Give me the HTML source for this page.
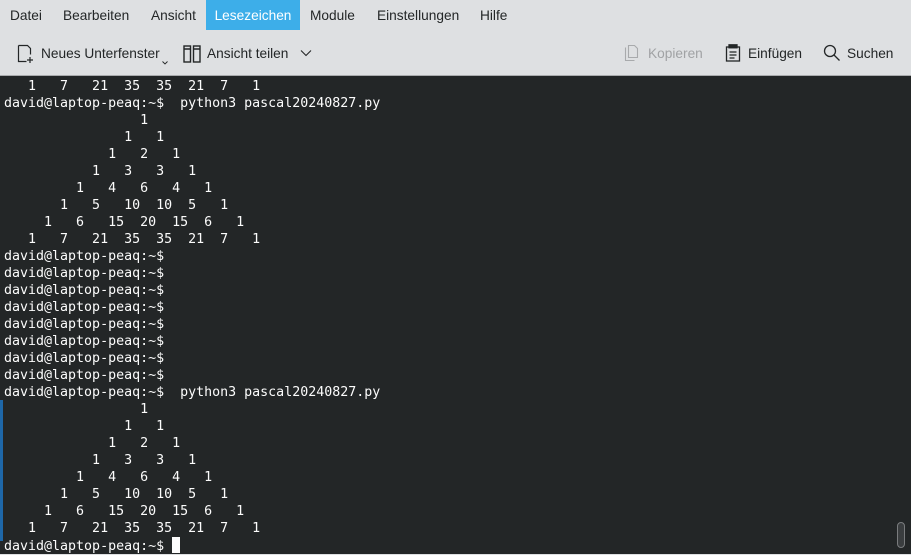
<!DOCTYPE html>
<html><head><meta charset="utf-8"><style>
*{margin:0;padding:0;box-sizing:border-box}
body{width:911px;height:554px;overflow:hidden;background:#dee0e2;font-family:"Liberation Sans","DejaVu Sans",sans-serif;position:relative}
.menu{position:absolute;top:0;left:0;height:30px;width:911px;font-size:13.7px;color:#232627}
.menu span{position:absolute;top:0;height:30px;line-height:31px}
.sel{background:#3daee9;color:#fff}
.tb{position:absolute;font-size:13.7px;color:#232627;top:46px;line-height:16px}
.term{position:absolute;top:75px;left:0;width:911px;height:479px;background:#232627;border-top:1px solid #a9abad}
pre{position:absolute;left:4px;top:2px;font-family:"DejaVu Sans Mono","Liberation Mono",monospace;font-size:13.3px;line-height:17px;color:#fcfcfc}
.cur{background:#fcfcfc;display:inline-block;width:8px;height:16px;vertical-align:-3px}
</style></head><body>
<div class="menu">
<span style="left:10px">Datei</span>
<span style="left:63px">Bearbeiten</span>
<span style="left:151px">Ansicht</span>
<span class="sel" style="left:206px;width:94px;text-align:center">Lesezeichen</span>
<span style="left:310px">Module</span>
<span style="left:377px">Einstellungen</span>
<span style="left:480px">Hilfe</span>
</div>
<svg style="position:absolute;left:17px;top:44px" width="18" height="20" viewBox="0 0 18 20" fill="none" stroke="#232627" stroke-width="1.2"><path d="M1.5 1.5h9l3 3v6M1.5 1.5v16h8"/><path d="M13 13v6M10 16h6"/></svg>
<div class="tb" style="left:41px">Neues Unterfenster</div>
<svg style="position:absolute;left:162px;top:61px" width="6" height="4" viewBox="0 0 6 4" fill="none" stroke="#232627" stroke-width="0.9"><path d="M0.5 0.5l2.5 2.5 2.5-2.5"/></svg>
<svg style="position:absolute;left:183px;top:45px" width="18" height="18" viewBox="0 0 18 18" fill="none" stroke="#232627" stroke-width="1.4"><rect x="1" y="1" width="6.5" height="16"/><rect x="10.5" y="1" width="6.5" height="16"/><path d="M1 4h6.5M10.5 4h6.5"/></svg>
<div class="tb" style="left:207px">Ansicht teilen</div>
<svg style="position:absolute;left:300px;top:49px" width="12" height="8" viewBox="0 0 12 8" fill="none" stroke="#232627" stroke-width="1.1"><path d="M1 1.5l5 5 5-5"/></svg>
<svg style="position:absolute;left:624px;top:44px" width="16" height="18" viewBox="0 0 16 18" fill="none" stroke="#a8aaac" stroke-width="1.1"><path d="M1.5 3.5v13h9M4.5 1.5h6l3 3v9h-9z"/></svg>
<div class="tb" style="left:648px;color:#a0a2a4">Kopieren</div>
<svg style="position:absolute;left:725px;top:44px" width="16" height="18" viewBox="0 0 16 18" fill="none" stroke="#232627" stroke-width="1.3"><rect x="1.5" y="3" width="13" height="14"/><rect x="4" y="0.8" width="8" height="3" fill="#232627"/><path d="M4.5 8h7M4.5 11h7M4.5 14h5"/></svg>
<div class="tb" style="left:748px">Einfügen</div>
<svg style="position:absolute;left:823px;top:44px" width="18" height="18" viewBox="0 0 18 18" fill="none" stroke="#232627" stroke-width="1.3"><circle cx="7" cy="7" r="5.5"/><path d="M11 11l5.5 5.5"/></svg>
<div class="tb" style="left:847px">Suchen</div>
<div class="term">
<div style="position:absolute;left:0;top:324px;width:3px;height:141px;background:#1e67a8"></div>
<div style="position:absolute;left:897px;top:446px;width:8px;height:26px;border:1px solid #7a7c7e;border-radius:4px;background:#3a3d3f"></div>
<pre>   1   7   21  35  35  21  7   1
david@laptop-peaq:~$  python3 pascal20240827.py
                 1
               1   1
             1   2   1
           1   3   3   1
         1   4   6   4   1
       1   5   10  10  5   1
     1   6   15  20  15  6   1
   1   7   21  35  35  21  7   1
david@laptop-peaq:~$
david@laptop-peaq:~$
david@laptop-peaq:~$
david@laptop-peaq:~$
david@laptop-peaq:~$
david@laptop-peaq:~$
david@laptop-peaq:~$
david@laptop-peaq:~$
david@laptop-peaq:~$  python3 pascal20240827.py
                 1
               1   1
             1   2   1
           1   3   3   1
         1   4   6   4   1
       1   5   10  10  5   1
     1   6   15  20  15  6   1
   1   7   21  35  35  21  7   1
david@laptop-peaq:~$ <span class="cur"></span></pre>
</div>
</body></html>
